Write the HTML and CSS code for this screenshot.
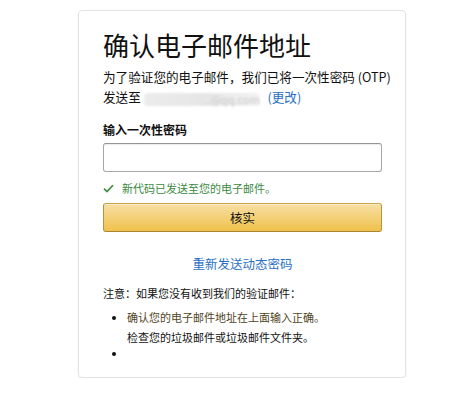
FILE: index.html
```html
<!DOCTYPE html>
<html lang="zh-CN">
<head>
<meta charset="utf-8">
<title>确认电子邮件地址</title>
<link rel="stylesheet" href="styles.css">
</head>
<body>
<div class="page">
  <div class="card">
    <h1 class="title">确认电子邮件地址</h1>
    <p class="sub">为了验证您的电子邮件，我们已将一次性密码 (OTP)<br>发送至 <span class="email">..@qq.com</span> <a class="link change" href="#">(更改)</a></p>
    <label class="label" for="otp">输入一次性密码</label>
    <input class="input" id="otp" type="text">
    <div class="success">
      <svg class="check" width="11" height="9" viewBox="0 0 11 9"><path d="M1 4.6 L4 7.6 L10 1.2" fill="none" stroke="#3b8a3e" stroke-width="1.6"/></svg>
      <span>新代码已发送至您的电子邮件。</span>
    </div>
    <button class="btn" type="button">核实</button>
    <div class="resend"><a class="link" href="#">重新发送动态密码</a></div>
    <p class="note">注意：如果您没有收到我们的验证邮件：</p>
    <ul class="tips">
      <li><span class="warn">确认您的电子邮件地址在上面输入正确。</span><br>检查您的垃圾邮件或垃圾邮件文件夹。</li>
      <li class="empty"></li>
    </ul>
  </div>
</div>
</body>
</html>
```
FILE: styles.css
```css
html, body {
  margin: 0;
  background: #fff;
}
body {
  font-family: "Noto Sans CJK SC", "Liberation Sans", sans-serif;
  color: #111;
}
.page {
  padding: 10px 0 0 78px;
}
.card {
  box-sizing: border-box;
  width: 328px;
  height: 368px;
  border: 1px solid #e3e3e3;
  border-radius: 4px;
  box-shadow: 0 1px 2px rgba(0,0,0,0.08);
  padding: 18px 23px 0 24px;
}
.title {
  margin: 0;
  font-size: 26px;
  line-height: 32px;
  font-weight: 400;
  white-space: nowrap;
}
.sub {
  margin: 6px 0 0;
  font-size: 12.6px;
  line-height: 20px;
  white-space: nowrap;
}
.email {
  display: inline-block;
  width: 116px;
  height: 13px;
  line-height: 13px;
  vertical-align: -2px;
  text-align: right;
  font-size: 11px;
  color: #c8c8c8;
  background: linear-gradient(to right, #ececec, #e6e6e6 50%, #f2f2f2);
  filter: blur(1px);
  border-radius: 4px;
}
.link {
  color: #2a6fc4;
  text-decoration: none;
}
.change {
  margin-left: 5px;
}
.label {
  display: block;
  margin-top: 13px;
  font-size: 12px;
  line-height: 20px;
  font-weight: 700;
}
.input {
  display: block;
  box-sizing: border-box;
  width: 279px;
  height: 29px;
  margin: 3px 0 0;
  border: 1px solid #a6a6a6;
  border-top-color: #949494;
  border-radius: 3px;
  box-shadow: 0 1px 0 rgba(0,0,0,0.07) inset;
  background: #fff;
}
.success {
  display: flex;
  align-items: center;
  gap: 8px;
  margin-top: 6px;
  height: 20px;
  font-size: 11px;
  color: #3b8a3e;
}
.check {
  flex: none;
}
.btn {
  display: block;
  box-sizing: border-box;
  width: 279px;
  height: 29px;
  margin-top: 5px;
  border: 1px solid;
  border-color: #c9a54a #b8943a #a88734;
  border-radius: 3px;
  background: linear-gradient(to bottom, #f7dfa5, #f0c14b);
  box-shadow: inset 0 1px 0 rgba(255,255,255,0.4);
  font-family: inherit;
  font-size: 12.5px;
  color: #111;
  padding: 0;
}
.resend {
  margin-top: 22px;
  text-align: center;
  font-size: 12.5px;
  line-height: 20px;
}
.note {
  margin: 9px 0 0;
  font-size: 11px;
  line-height: 20px;
}
.tips {
  margin: 4px 0 0;
  padding-left: 24px;
  font-size: 11px;
  line-height: 20px;
}
.warn {
  color: #4f4524;
}
.tips .empty {
  height: 12px;
  line-height: 12px;
}
```
